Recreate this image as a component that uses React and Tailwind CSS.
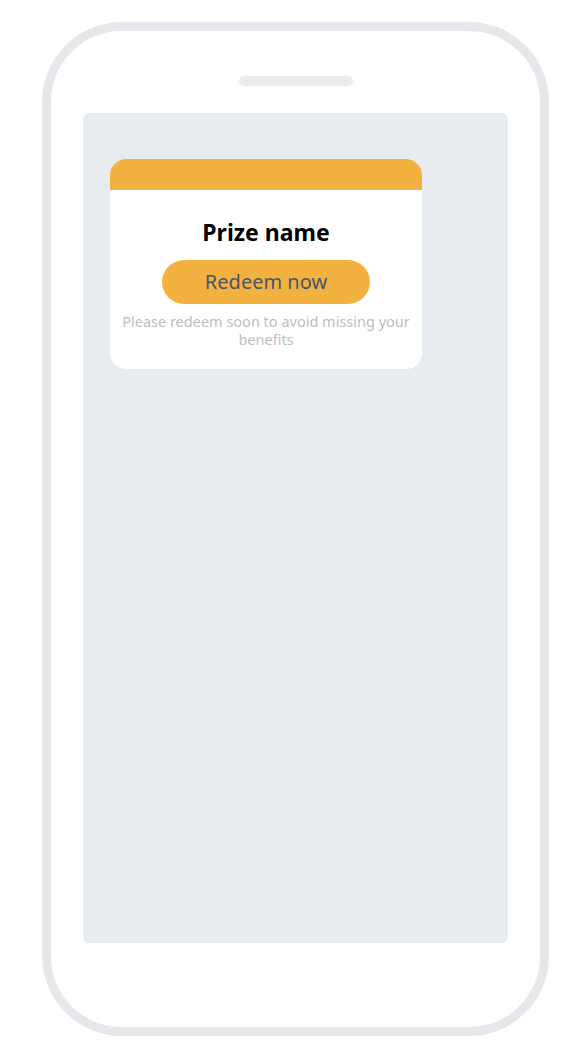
export default function App() {
  return (
    <div className="w-[582px] h-[1052px] bg-white relative" style={{ fontFamily: '"Noto Sans", sans-serif' }}>
      <div className="pt-[22px] pl-[42px]">
        <div className="w-[507px] h-[1014px] border-[9px] border-[#e6e7eb] rounded-[80px] flex flex-col items-center">
          <div className="mt-[45px] w-[114px] h-[10px] rounded-full bg-[#ebecf0]"></div>
          <div className="mt-[27px] w-[425px] h-[830px] rounded-[6px] bg-[#e8ebf0] pl-[27px] pt-[46px]">
            <div className="w-[312px] h-[210px] rounded-[16px] bg-white overflow-hidden flex flex-col items-center">
              <div className="w-full h-[31px] bg-[#f3b240]"></div>
              <div className="mt-[27px] text-[23px] leading-[30px] font-bold text-black">Prize name</div>
              <button className="mt-[13px] w-[208px] h-[44px] rounded-full bg-[#f3b240] text-[20px] text-[#4a5568]">Redeem now</button>
              <div className="mt-[8px] px-[8px] text-center text-[14.5px] leading-[18px] text-[#bdbdbd]">Please redeem soon to avoid missing your benefits</div>
            </div>
          </div>
        </div>
      </div>
    </div>
  );
}
